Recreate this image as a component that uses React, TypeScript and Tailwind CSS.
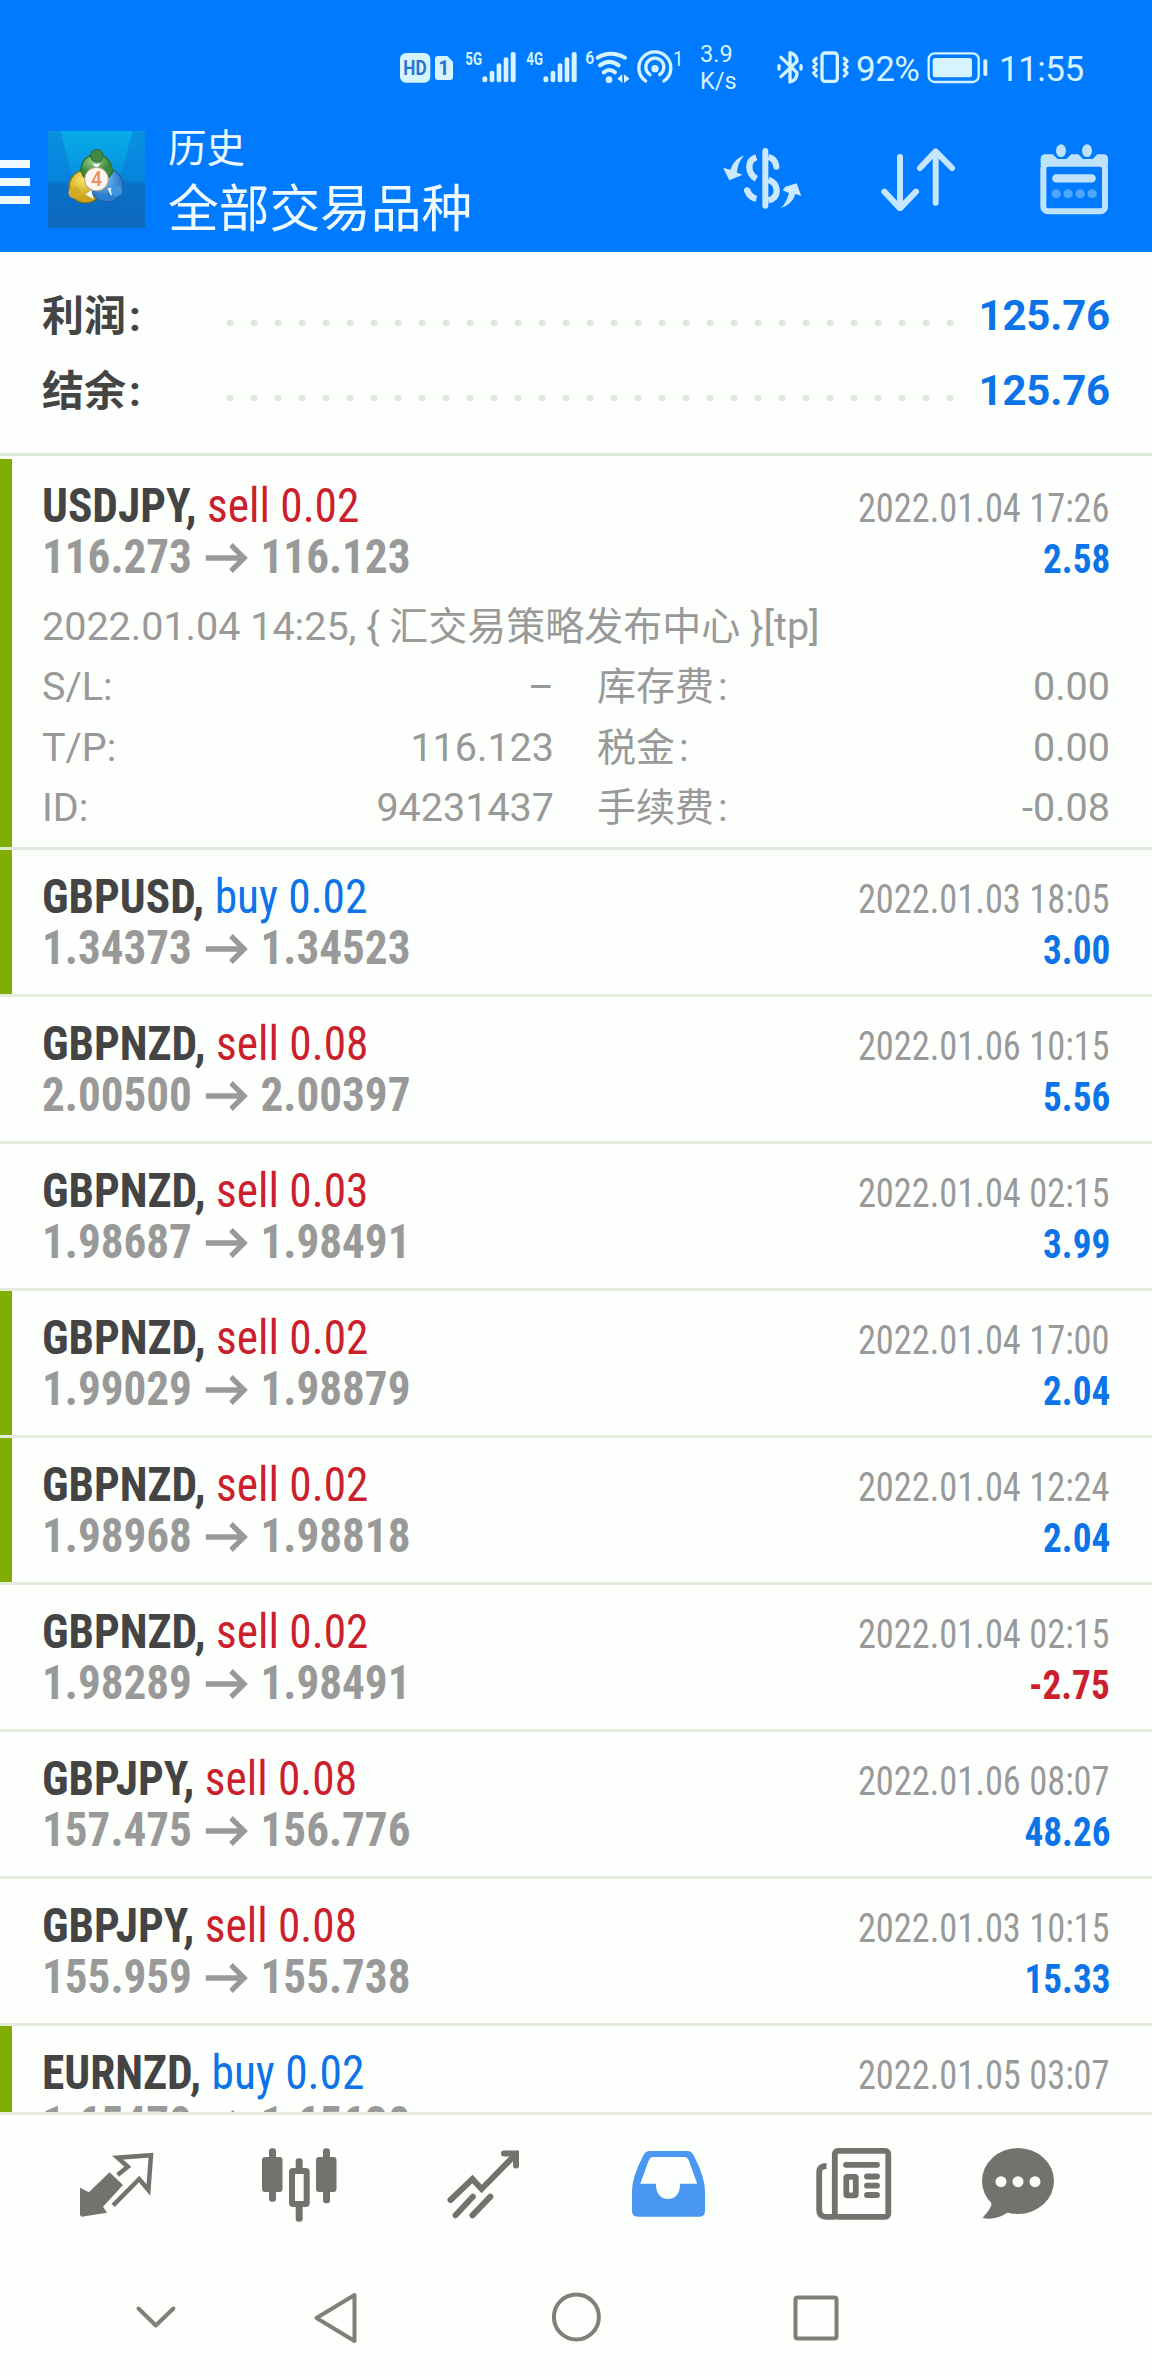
interface Deal {
  symbol: string;
  side: 'buy' | 'sell';
  volume: string;
  open: string;
  close: string;
  time: string;
  profit?: string;
  marked?: boolean;
}

const deals: Deal[] = [
  { symbol: 'GBPUSD', side: 'buy', volume: '0.02', open: '1.34373', close: '1.34523', time: '2022.01.03 18:05', profit: '3.00', marked: true },
  { symbol: 'GBPNZD', side: 'sell', volume: '0.08', open: '2.00500', close: '2.00397', time: '2022.01.06 10:15', profit: '5.56' },
  { symbol: 'GBPNZD', side: 'sell', volume: '0.03', open: '1.98687', close: '1.98491', time: '2022.01.04 02:15', profit: '3.99' },
  { symbol: 'GBPNZD', side: 'sell', volume: '0.02', open: '1.99029', close: '1.98879', time: '2022.01.04 17:00', profit: '2.04', marked: true },
  { symbol: 'GBPNZD', side: 'sell', volume: '0.02', open: '1.98968', close: '1.98818', time: '2022.01.04 12:24', profit: '2.04', marked: true },
  { symbol: 'GBPNZD', side: 'sell', volume: '0.02', open: '1.98289', close: '1.98491', time: '2022.01.04 02:15', profit: '-2.75' },
  { symbol: 'GBPJPY', side: 'sell', volume: '0.08', open: '157.475', close: '156.776', time: '2022.01.06 08:07', profit: '48.26' },
  { symbol: 'GBPJPY', side: 'sell', volume: '0.08', open: '155.959', close: '155.738', time: '2022.01.03 10:15', profit: '15.33' },
  { symbol: 'EURNZD', side: 'buy', volume: '0.02', open: '1.65470', close: '1.65620', time: '2022.01.05 03:07', marked: true },
];

const firstDeal: Deal = {
  symbol: 'USDJPY', side: 'sell', volume: '0.02', open: '116.273', close: '116.123', time: '2022.01.04 17:26', profit: '2.58', marked: true,
};

const SignalBars = ({ label }: { label: string }) => (
  <svg className="overflow-visible" width="52" height="34" viewBox="0 0 156 102" fill="#d6f4ff">
    <text x="-2" y="46" fontSize="56" fontWeight="700" textLength="50" lengthAdjust="spacingAndGlyphs">{label}</text>
    <rect x="49" y="79" width="15" height="18" rx="7" />
    <rect x="71" y="62" width="14" height="35" rx="6" />
    <rect x="92" y="40" width="14" height="57" rx="6" />
    <rect x="113" y="22" width="14" height="75" rx="6" />
    <rect x="134" y="6" width="15" height="91" rx="6" />
  </svg>
);

const StatusBar = () => (
  <div className="flex h-[108px] items-start pl-[400px] pt-[50px] text-[#d6f4ff]">
    <svg width="54" height="34" viewBox="0 0 162 102" fill="#d6f4ff">
      <rect x="0" y="9" width="91" height="89" rx="18" />
      <path d="M114 18h28l17 17v46q0 9-9 9h-36q-9 0-9-9V27q0-9 9-9z" />
      <text x="10" y="76" fontSize="58" fontWeight="700" fill="#2874cf" textLength="70" lengthAdjust="spacingAndGlyphs">HD</text>
      <text x="115" y="76" fontSize="58" fontWeight="700" fill="#2874cf">1</text>
    </svg>
    <div className="ml-[12px]"><SignalBars label="5G" /></div>
    <div className="ml-[9px]"><SignalBars label="4G" /></div>
    <svg className="ml-[7px] overflow-visible" width="44" height="34" viewBox="0 0 132 102" fill="none" stroke="#d6f4ff" strokeWidth="12" strokeLinecap="round">
      <text x="-2" y="43" fontSize="56" fontWeight="600" fill="#d6f4ff" stroke="none" textLength="27" lengthAdjust="spacingAndGlyphs">6</text>
      <path d="M35 23q38-23 82 0M42 46q28-21 56 0M53 67q17-14 34 0" />
      <circle cx="69" cy="89" r="10" fill="#d6f4ff" stroke="none" />
      <path d="M94 86l15-13v26zM131 86l-17-13v26z" fill="#d6f4ff" stroke="none" />
    </svg>
    <svg className="ml-[6px] overflow-visible" width="50" height="34" viewBox="0 0 150 102" fill="none" stroke="#d6f4ff" strokeWidth="10" strokeLinecap="round">
      <path d="M29 93a48 48 0 1 1 55 0M42 74a27 27 0 1 1 29 0" />
      <circle cx="57" cy="56" r="11" fill="#d6f4ff" stroke="none" />
      <text x="112" y="47" fontSize="58" fill="#d6f4ff" stroke="none" textLength="30" lengthAdjust="spacingAndGlyphs">1</text>
    </svg>
    <div className="-mt-[9px] ml-[14px] w-[40px] text-[23.5px] leading-[27px]">
      <div>3.9</div>
      <div>K/s</div>
    </div>
    <svg className="ml-[37px]" width="76" height="34" viewBox="0 0 228 102" fill="none" stroke="#d6f4ff" strokeWidth="10" strokeLinecap="round" strokeLinejoin="round">
      <path d="M12 22l48 46q0 22-21 28V8q21 6 21 26L12 80M6 47v10M72 47v10" />
      <rect x="135" y="9" width="46" height="85" rx="9" />
      <path d="M118 25l-8 8 8 9-8 9 8 9-8 9 8 9M202 25l8 8-8 9 8 9-8 9 8 9-8 9" />
    </svg>
    <div className="ml-[3px] w-[66px] text-[35px] leading-[40px] tracking-[-0.5px]">92%</div>
    <svg className="ml-[5px]" width="62" height="34" viewBox="0 0 186 102" fill="none" stroke="#d6f4ff" strokeWidth="7">
      <rect x="5" y="10" width="150" height="86" rx="18" />
      <rect x="17" y="24" width="118" height="58" rx="8" fill="#d6f4ff" stroke="none" />
      <rect x="169" y="28" width="12" height="50" rx="5" fill="#d6f4ff" stroke="none" />
    </svg>
    <div className="ml-[10px] text-[35px] leading-[40px] tracking-[-0.5px]">11:55</div>
  </div>
);

const AppLogo = () => (
  <svg className="ml-[18px] mt-[23px]" width="97" height="97" viewBox="0 0 290 290">
    <defs>
      <linearGradient id="logoBg" x1="0" y1="0" x2="0" y2="1">
        <stop offset="0" stopColor="#0890e2" />
        <stop offset="0.5" stopColor="#0784dc" />
        <stop offset="0.56" stopColor="#0870c8" />
        <stop offset="1" stopColor="#0d68bd" />
      </linearGradient>
      <linearGradient id="logoBeam" x1="0" y1="0" x2="0" y2="1">
        <stop offset="0" stopColor="#06aee8" stopOpacity="0.9" />
        <stop offset="1" stopColor="#06aee8" stopOpacity="0.2" />
      </linearGradient>
      <radialGradient id="logoGreen" cx="0.4" cy="0.3"><stop offset="0" stopColor="#9ccf86" /><stop offset="1" stopColor="#3d8a3c" /></radialGradient>
      <radialGradient id="logoYellow" cx="0.4" cy="0.3"><stop offset="0" stopColor="#f8e46c" /><stop offset="1" stopColor="#cda51a" /></radialGradient>
      <radialGradient id="logoBlue" cx="0.4" cy="0.3"><stop offset="0" stopColor="#8cc6f4" /><stop offset="1" stopColor="#2b7fd0" /></radialGradient>
    </defs>
    <rect width="290" height="290" fill="url(#logoBg)" />
    <path d="M38 0h215l-40 150H75z" fill="url(#logoBeam)" />
    <circle cx="112" cy="166" r="49" fill="url(#logoYellow)" stroke="#7c7320" strokeWidth="4" />
    <circle cx="176" cy="163" r="49" fill="url(#logoBlue)" stroke="#235f9c" strokeWidth="4" />
    <path d="M98 118q4-46 47-48 42 2 48 52l-10 16h-76z" fill="url(#logoGreen)" stroke="#2a6b3b" strokeWidth="4" />
    <path d="M132 98l13 14 13-14zM112 190l18-14 6 28zM178 172l18-4-7 26z" fill="#eefaff" />
    <circle cx="146" cy="74" r="19" fill="#408843" stroke="#2a6b3b" strokeWidth="3" />
    <circle cx="79" cy="184" r="18" fill="#d3ad25" />
    <circle cx="205" cy="178" r="17" fill="#3f94dc" />
    <circle cx="145" cy="144" r="35" fill="#fdf6f1" stroke="#b7a98d" strokeWidth="3" />
    <text x="145" y="165" fontSize="58" fontWeight="500" textAnchor="middle" fill="#ee8d5c">4</text>
  </svg>
);

const Header = () => (
  <header className="h-[252px] bg-[#007aff]">
    <StatusBar />
    <div className="flex h-[144px] items-start">
      <div className="flex w-[30px] flex-col gap-[10px] pt-[52px]">
        <div className="h-2 bg-[#effaff]" />
        <div className="h-2 bg-[#effaff]" />
        <div className="h-2 bg-[#effaff]" />
      </div>
      <AppLogo />
      <div className="ml-[23px] mt-[16px] w-[554px] text-[#f0fbff]">
        <div className="text-[38.5px] leading-[50px]">历史</div>
        <div className="text-[50.7px] leading-[71px]">全部交易品种</div>
      </div>
      <svg className="mt-[39px]" width="80" height="64" viewBox="125 80 240 192" fill="none" stroke="#cbe8fc" strokeWidth="19">
        <path d="M255 92v164" strokeLinecap="round" strokeWidth="18" />
        <path d="M228 111q-21 7-21 28 0 24 21 36M264 110q20 4 24 28M264 178q26 10 25 35-1 22-25 27M228 236q-22-6-28-28" />
        <circle cx="288" cy="139" r="9" fill="#cbe8fc" stroke="none" />
        <circle cx="200" cy="210" r="9" fill="#cbe8fc" stroke="none" />
        <path d="M191 105q-30 12-41 43l-22-6 19 38 40-17-17-6q0-26 21-52zM300 264q18-14 26-46l-19-8 8-11 34-10 14 38-18-6q-8 30-45 43z" fill="#cbe8fc" stroke="none" />
      </svg>
      <svg className="ml-[78px] mt-[39px]" width="76" height="64" viewBox="600 80 228 192" fill="none" stroke="#c6e6fd" strokeWidth="18" strokeLinecap="round" strokeLinejoin="round">
        <path d="M660 110v152M613 214l47 50 48-50M767 247V94M720 143l47-50 49 50" />
      </svg>
      <svg className="ml-[82px] mt-[35px]" width="72" height="72" viewBox="1074 68 216 216" fill="none" stroke="#bfe2fb">
        <path d="M1082 116q0-14 14-14h22l15 14h26l15-14h21l14 14h29l14-14h18q14 0 14 14v20h-202z" fill="#bfe2fb" stroke="none" />
        <rect x="1090" y="130" width="185" height="143" rx="14" strokeWidth="18" />
        <ellipse cx="1143" cy="91" rx="15" ry="19" fill="#bfe2fb" stroke="none" />
        <ellipse cx="1221" cy="91" rx="15" ry="19" fill="#bfe2fb" stroke="none" />
        <path d="M1129 174h106" strokeWidth="25" strokeLinecap="round" />
        <path d="M1128 220h1M1164 220h1M1200 220h1M1236 220h1" strokeWidth="27" strokeLinecap="round" stroke="#4fa6fb" />
      </svg>
    </div>
  </header>
);

const SummaryLine = ({ label, value }: { label: string; value: string }) => (
  <div className="flex h-[75px] items-start">
    <div className="w-[184px] pt-px text-[42px] font-bold leading-[60px] text-[#444]">
      {label}
      <span className="ml-[3px]">:</span>
    </div>
    <svg className="mt-[33px]" width="728" height="8" viewBox="0 0 728 8">
      {Array.from({ length: 31 }, (_, i) => (
        <circle key={i} cx={4 + i * 24} cy="4" r="3.300" fill="#dbe8da" />
      ))}
    </svg>
    <div className="flex-1 text-right text-[42px] font-bold leading-[60px] tracking-[-0.2px] text-[#0c74e8]">{value}</div>
  </div>
);

const DealHead = ({ deal }: { deal: Deal }) => (
  <div className="font-['Roboto_Condensed','Roboto',sans-serif]">
    <div className="flex h-[51px] items-baseline justify-between text-[48px] leading-[51px]">
      <div className="origin-left scale-x-[0.945]">
        <span className="font-bold text-[#444]">{deal.symbol}, </span>
        <span className={deal.side === 'buy' ? 'text-[#0c74e8]' : 'text-[#cc1f2d]'}>
          {deal.side} {deal.volume}
        </span>
      </div>
      <div className="origin-right scale-x-[0.91] text-[40px] text-[#999]">{deal.time}</div>
    </div>
    <div className="flex h-[51px] items-baseline justify-between text-[48px] font-bold leading-[51px] text-[#999]">
      <div className="flex origin-left scale-x-[0.94] items-baseline">
        <span>{deal.open}</span>
        <svg className="mx-[14px]" width="45" height="30" viewBox="0 0 45 30" fill="none" stroke="#999" strokeWidth="5.500">
          <path d="M0 15h42M27 2l14 13-14 13" />
        </svg>
        <span>{deal.close}</span>
      </div>
      {deal.profit && (
        <div
          className={`origin-right scale-x-[0.93] text-[40px] ${deal.profit.startsWith('-') ? 'text-[#cc1f2d]' : 'text-[#0c74e8]'}`}
        >
          {deal.profit}
        </div>
      )}
    </div>
  </div>
);

const DealRow = ({ deal }: { deal: Deal }) => (
  <div className="flex h-[147px] shrink-0 border-b-[3px] border-[#e3ebdd]">
    <div className={deal.marked ? 'w-3 bg-[#80ae04]' : 'w-3'} />
    <div className="flex-1 pl-[30px] pr-[42px] pt-[21px]">
      <DealHead deal={deal} />
    </div>
  </div>
);

const DetailLine = ({ left, leftValue, right, rightValue }: { left: string; leftValue: string; right: string; rightValue: string }) => (
  <div className="flex h-[60.5px] leading-[60.5px]">
    <div className="flex w-[512px] justify-between">
      <span>{left}</span>
      <span>{leftValue}</span>
    </div>
    <div className="ml-[43px] flex flex-1 justify-between">
      <span>
        <span className="text-[39px]">{right}</span>
        <span className="ml-[4px]">:</span>
      </span>
      <span>{rightValue}</span>
    </div>
  </div>
);

const ExpandedDeal = () => (
  <div className="flex h-[391px] shrink-0 border-b-[3px] border-[#dde9db]">
    <div className="w-3 bg-[#80ae04]" />
    <div className="flex-1 pl-[30px] pr-[42px] pt-[21px]">
      <DealHead deal={firstDeal} />
      <div className="pt-[14px] text-[39.5px] text-[#999]">
        <div className="h-[61px] leading-[61px]">
          {'2022.01.04 14:25, { '}
          <span className="text-[39px]">汇交易策略发布中心</span>
          {' }[tp]'}
        </div>
        <DetailLine left="S/L:" leftValue="–" right="库存费" rightValue="0.00" />
        <DetailLine left="T/P:" leftValue="116.123" right="税金" rightValue="0.00" />
        <DetailLine left="ID:" leftValue="94231437" right="手续费" rightValue="-0.08" />
      </div>
    </div>
  </div>
);

const TabBar = () => (
  <nav className="flex h-[135px] items-start border-t-[3px] border-[#e8ead9] pl-[76px] pt-[30px]">
    <svg width="84" height="80" viewBox="0 0 84 80" fill="none">
      <path d="M4 42.700l8.900 4.600 20.600-20L47 40 27 61.700l4 6-25.400 4L4 70z" fill="#72726f" />
      <path d="M41.600 30l10.200-8.300-10.200-9L75 10.300 72.400 45l-9.200-11-26 26.300" stroke="#72726f" strokeWidth="4.500" />
    </svg>
    <svg className="ml-[100px]" width="84" height="80" viewBox="0 0 84 80" fill="#72726f">
      <rect x="2" y="12" width="20.500" height="35" rx="3" />
      <rect x="9" y="3.300" width="7" height="53.400" rx="3" />
      <rect x="56" y="12" width="20.500" height="35" rx="3" />
      <rect x="63" y="3.300" width="7" height="55" rx="3" />
      <rect x="35.700" y="13.300" width="7" height="12" rx="3" />
      <rect x="35.700" y="60" width="7" height="16.700" rx="3" />
      <rect x="32" y="26" width="14.700" height="33" rx="1" fill="none" stroke="#72726f" strokeWidth="6" />
    </svg>
    <svg className="ml-[101px]" width="84" height="80" viewBox="0 0 84 80" fill="none" stroke="#72726f" strokeWidth="6" strokeLinecap="round">
      <path d="M5.500 55L27.400 34l9.200 10L70 10M10.500 70.300l17.300-18.600M27.400 70.300l18-18.600" />
      <path d="M59 8.500h12v12" />
    </svg>
    <svg className="ml-[96px]" width="84" height="80" viewBox="0 0 84 80" fill="#4a97f2">
      <path fillRule="evenodd" d="M25 6h37q4.500 0 6.500 4 11.500 22 11.500 36v20q0 5.700-5.500 5.700h-62q-5.500 0-5.500-5.700V46q0-14 11.500-36 2-4 6.500-4zM28 12h31.500q3 0 4.500 4l8.200 22.700H55V42q-2 12-12 12T31 42v-3.300H15.300L23.500 16q1.500-4 4.500-4z" />
    </svg>
    <svg className="ml-[101px]" width="84" height="80" viewBox="0 0 84 80" fill="none" stroke="#72726f" strokeWidth="5.800">
      <rect x="24.800" y="5.900" width="53.500" height="65.900" rx="3" />
      <path d="M16.500 21q-7.300 0-7.300 6v38q0 6.800 7 6.800h9" />
      <path d="M36 19.800h31M57 31.500h10M57 40.700h10M57 50h10" strokeLinecap="round" />
      <rect x="36.300" y="31.800" width="9.500" height="18.500" rx="1" />
    </svg>
    <svg className="ml-[81px]" width="84" height="80" viewBox="0 0 84 80" fill="#72726f">
      <ellipse cx="43" cy="36" rx="36" ry="33" />
      <path d="M12 48q8 9 2 17l-6.500 8q13 3 26-6z" />
      <g fill="#fdfffc">
        <circle cx="26" cy="36.700" r="5.500" />
        <circle cx="43" cy="36.700" r="5.500" />
        <circle cx="60" cy="36.700" r="5.500" />
      </g>
    </svg>
  </nav>
);

const SystemNav = () => (
  <div className="flex h-[129px] items-start pl-[134px] pt-[40px]">
    <svg width="44" height="56" viewBox="0 0 44 56" fill="none" stroke="#80807b" strokeWidth="4" strokeLinecap="round" strokeLinejoin="round">
      <path d="M4.500 21.500L21.800 38.500 39.400 21.500" />
    </svg>
    <svg className="ml-[133px]" width="50" height="60" viewBox="0 0 50 60" fill="none" stroke="#80807b" strokeWidth="4" strokeLinejoin="round">
      <path d="M5.500 31L43.500 8v46z" />
    </svg>
    <svg className="ml-[187px]" width="56" height="60" viewBox="0 0 56 60" fill="none" stroke="#80807b" strokeWidth="4">
      <circle cx="28.400" cy="30" r="22.500" />
    </svg>
    <svg className="ml-[186px]" width="52" height="60" viewBox="0 0 52 60" fill="none" stroke="#80807b" strokeWidth="4">
      <rect x="5.500" y="10.500" width="41" height="41" rx="2" />
    </svg>
  </div>
);

export default function App() {
  return (
    <div className="h-[2376px] w-[1152px] overflow-hidden bg-[#fdfffc] font-['Roboto','Noto_Sans_CJK_SC',sans-serif]">
      <Header />
      <section className="h-[204px] border-b-[3px] border-[#dde9db] pl-[42px] pr-[42px] pt-[34px]">
        <SummaryLine label="利润" value="125.76" />
        <SummaryLine label="结余" value="125.76" />
      </section>
      <main className="flex h-[1656px] flex-col overflow-hidden pt-[3px]">
        <ExpandedDeal />
        {deals.map((deal, i) => (
          <DealRow key={i} deal={deal} />
        ))}
      </main>
      <TabBar />
      <SystemNav />
    </div>
  );
}
